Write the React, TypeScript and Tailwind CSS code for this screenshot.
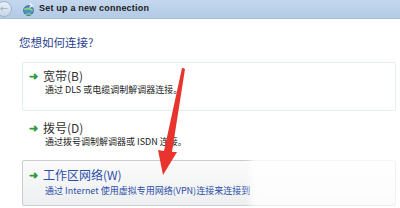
export default function App() {
  return (
    <div className="relative w-[400px] h-[208px] overflow-hidden bg-white font-['Noto_Sans_CJK_SC',sans-serif]">
      {/* Title bar */}
      <div className="h-[19px] flex items-center bg-gradient-to-b from-[#c4d7ee] to-[#b3cae6] border-b border-[#a9bfdc]">
        <div className="ml-[-4px] w-[16px] h-[16px] rounded-full border border-[#9fb3cc] bg-gradient-to-b from-[#e8eef6] to-[#c8d6e8] flex items-center justify-center">
          <span className="text-[8px] leading-none text-[#8a9bb0]">←</span>
        </div>
        <svg className="ml-[10px]" width="13" height="13" viewBox="0 0 12 12">
          <circle cx="6" cy="7" r="4.5" fill="#4d8fd1" stroke="#2f5f98" strokeWidth="0.8" />
          <path d="M2 6 Q6 4 10 7" stroke="#8fd36a" strokeWidth="1.4" fill="none" />
          <path d="M3 11 Q6 9 9 11" stroke="#8fd36a" strokeWidth="1" fill="none" />
          <path d="M7 0.5 L9.5 2.5 L7 4" stroke="#f4f4f4" strokeWidth="1.2" fill="none" />
        </svg>
        <span className="ml-[4px] text-[9px] font-semibold text-[#1a1a1a] font-['Liberation_Sans',sans-serif] tracking-[0.2px]">
          Set up a new connection
        </span>
      </div>

      {/* Heading */}
      <div className="mt-[16px] ml-[19px] text-[11.5px] leading-[14px] text-[#2a3f8c]">您想如何连接?</div>

      {/* Options */}
      <div className="mt-[13px] ml-[22px] mr-[4px] flex flex-col">
        <div className="h-[49px] border border-[#e3eef1] rounded-[2px] pl-[6px] pt-[5px]">
          <div className="flex items-center">
            <span className="text-[#2f9a3a] text-[11px] font-bold leading-none">➜</span>
            <span className="ml-[5px] text-[12px] leading-[15px] text-[#333]">宽带(B)</span>
          </div>
          <div className="ml-[16px] mt-[1px] text-[9px] leading-[11px] text-[#222]">通过 DLS 或电缆调制解调器连接。</div>
        </div>

        <div className="h-[49px] pl-[7px] pt-[9px]">
          <div className="flex items-center">
            <span className="text-[#2f9a3a] text-[11px] font-bold leading-none">➜</span>
            <span className="ml-[5px] text-[12px] leading-[15px] text-[#333]">拨号(D)</span>
          </div>
          <div className="ml-[16px] mt-[1px] text-[9px] leading-[11px] text-[#222]">通过拨号调制解调器或 ISDN 连接。</div>
        </div>

        <div className="h-[46px] border border-[#c9cdd1] rounded-[2px] bg-gradient-to-b from-[#fbfbfb] to-[#eeeff1] pl-[6px] pt-[6px]">
          <div className="flex items-center">
            <span className="text-[#2f9a3a] text-[11px] font-bold leading-none">➜</span>
            <span className="ml-[5px] text-[12px] leading-[15px] text-[#2b4fa8]">工作区网络(W)</span>
          </div>
          <div className="ml-[16px] mt-[3px] text-[9px] leading-[11px] text-[#2b4fa8] whitespace-nowrap">
            通过 Internet 使用虚拟专用网络(VPN)连接来连接到
          </div>
        </div>
      </div>

      {/* Watermark blur */}
      <div className="absolute left-[250px] top-[150px] w-[150px] h-[58px] bg-white/80 blur-[3px]" />

      {/* Red annotation arrow */}
      <svg className="absolute left-0 top-0" width="400" height="208" viewBox="0 0 400 208">
        <path d="M183 68 L185 69 L172 152 L177 152 L163 175 L158 150 L164 151 L182 68 Z" fill="#e8342c" />
      </svg>
    </div>
  );
}
